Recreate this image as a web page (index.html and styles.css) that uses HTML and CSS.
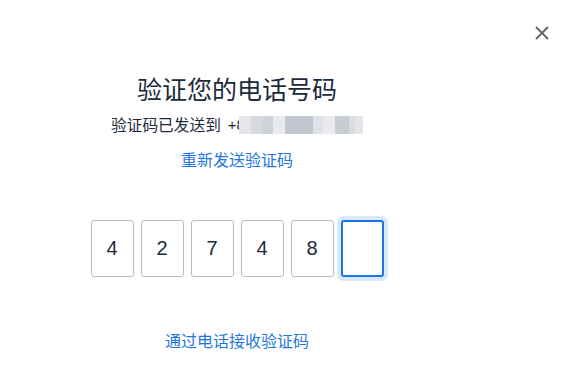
FILE: index.html
```html
<!DOCTYPE html>
<html lang="zh">
<head>
<meta charset="utf-8">
<link rel="stylesheet" href="styles.css">
</head>
<body>
<div class="dialog">
  <button class="close" aria-label="关闭">
    <svg width="14" height="14" viewBox="0 0 14 14"><path d="M1.5 1.5 L12.5 12.5 M12.5 1.5 L1.5 12.5" stroke="#5d6470" stroke-width="1.8" stroke-linecap="round" fill="none"/></svg>
  </button>
  <div class="content">
    <h1 class="title">验证您的电话号码</h1>
    <p class="sub"><span class="lead">验证码已发送到</span><span class="num">+8</span><span class="blur"><i class="b1"></i><i class="b2"></i><i class="b3"></i><i class="b4"></i><i class="b5"></i><i class="b6"></i><i class="b7"></i><i class="b8"></i><i class="b9"></i><i class="b10"></i></span></p>
    <a class="link resend" href="#">重新发送验证码</a>
    <div class="code">
      <div class="box">4</div>
      <div class="box">2</div>
      <div class="box">7</div>
      <div class="box">4</div>
      <div class="box">8</div>
      <div class="box active"></div>
    </div>
    <a class="link call" href="#">通过电话接收验证码</a>
  </div>
</div>
</body>
</html>
```
FILE: styles.css
```css
html, body {
  margin: 0;
  padding: 0;
  background: #ffffff;
}
body {
  font-family: "Noto Sans CJK SC", "Noto Sans", sans-serif;
  width: 573px;
  height: 384px;
  overflow: hidden;
}
.dialog {
  position: relative;
  width: 573px;
  height: 384px;
}
.close {
  position: absolute;
  top: 26px;
  left: 535px;
  width: 14px;
  height: 14px;
  padding: 0;
  border: 0;
  background: none;
  display: flex;
}
.content {
  width: 474px;
  padding-top: 72px;
  display: flex;
  flex-direction: column;
  align-items: center;
}
.title {
  margin: 0;
  font-size: 25px;
  line-height: 32px;
  font-weight: 400;
  color: #1d2a3c;
}
.sub {
  margin: 11px 0 0;
  font-size: 15.7px;
  line-height: 20px;
  color: #1d2a3c;
  display: flex;
  align-items: center;
}
.num {
  margin-left: 7px;
  font-family: "Liberation Sans", Arial, sans-serif;
  font-size: 15px;
}
.blur {
  display: flex;
  height: 18px;
  margin-left: -6px;
  filter: blur(0.6px);
}
.blur i {
  display: block;
  height: 18px;
}
.b1 { width: 12px; background: #e4e6ea; }
.b2 { width: 12px; background: #d6d9de; }
.b3 { width: 10px; background: #cfd3d9; }
.b4 { width: 12px; background: #e8eaed; }
.b5 { width: 28px; background: #c3c8d0; }
.b6 { width: 10px; background: #dfe2e6; }
.b7 { width: 12px; background: #e9ebee; }
.b8 { width: 14px; background: #c8ccd3; }
.b9 { width: 6px; background: #d9dce1; }
.b10 { width: 8px; background: #e3e5e9; }
.link {
  font-size: 16px;
  line-height: 22px;
  color: #1f78e0;
  text-decoration: none;
}
.resend {
  margin-top: 13px;
}
.code {
  margin-top: 50px;
  display: flex;
  gap: 7px;
}
.box {
  box-sizing: border-box;
  width: 43px;
  height: 57px;
  border: 1px solid #b9bdc3;
  border-radius: 3px;
  display: flex;
  align-items: center;
  justify-content: center;
  font-family: "Liberation Sans", Arial, sans-serif;
  font-size: 20px;
  color: #1d2a3c;
}
.box.active {
  border: 2.5px solid #1a73e8;
  box-shadow: 0 0 0 4px #d9e9fc;
  border-radius: 3px;
}
.call {
  margin-top: 52px;
}
```
